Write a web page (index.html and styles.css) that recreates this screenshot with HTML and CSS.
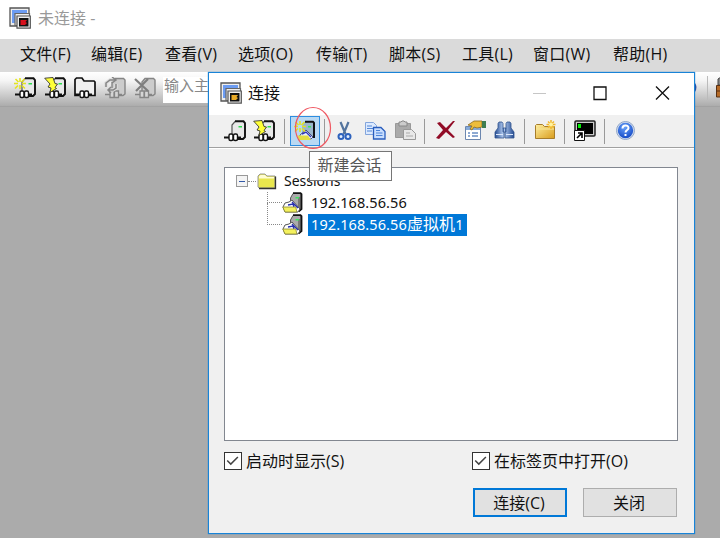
FILE: index.html
```html
<!DOCTYPE html>
<html lang="zh-CN">
<head>
<meta charset="utf-8">
<title>未连接</title>
<link rel="stylesheet" href="styles.css">
</head>
<body>
<svg class="defs" aria-hidden="true">
  <defs>
    <linearGradient id="gold" x1="0" y1="0" x2="1" y2="1"><stop offset="0" stop-color="#fff0a0"/><stop offset="1" stop-color="#d99c1c"/></linearGradient>
    <radialGradient id="ball" cx=".45" cy=".3" r=".7"><stop offset="0" stop-color="#69a2fa"/><stop offset="1" stop-color="#174cc8"/></radialGradient>
    <linearGradient id="lens" x1="0" y1="0" x2="1" y2="0"><stop offset="0" stop-color="#244b91"/><stop offset=".45" stop-color="#b8d0f4"/><stop offset="1" stop-color="#244b91"/></linearGradient>
    <symbol id="app" viewBox="0 0 22 22">
      <path fill="#eee" stroke="#555" stroke-width="1.300" d="M1 1h19v18H1z"/>
      <path fill="#6c9cf2" d="M3 3h15v4H7v9H3z"/>
      <path fill="#eee" stroke="#666" stroke-width="1.200" d="M6 6.500h14.500v12H6z"/>
      <path fill="#eee" stroke="#555" stroke-width="1.200" d="M8 9h13.300v12.200H8z"/>
      <path fill="#111" d="M10 11h9.500v8.500H10z"/>
      <path fill="currentColor" d="M11.500 13H18l-1.500 2L18 16l-2 2h-4.500z"/>
    </symbol>
    <symbol id="plug" viewBox="0 0 22 22">
      <path fill="none" stroke="#111" stroke-width="2.200" d="M0 17.500h6M13 17.500h4"/>
      <rect x="5" y="14" width="4" height="6.500" rx="1.500" fill="#fff" stroke="#111" stroke-width="1.400"/>
      <rect x="9.500" y="14" width="4" height="6.500" rx="1.500" fill="#fff" stroke="#111" stroke-width="1.400"/>
    </symbol>
    <symbol id="box" viewBox="0 0 22 22">
      <path fill="#e9e9e9" d="M8 5 11 1.500h10V17l-2 1.500H8z"/>
      <path fill="none" stroke="#555" stroke-width="1.200" d="M8 15V5l3-3.500h2"/>
      <path fill="none" stroke="#111" stroke-width="1.900" d="M11 1.300h8.500L21 3v14l-2 2h-5"/>
      <path fill="#2fdc50" d="M14.500 6h3.500v1.500h-3.500z"/>
    </symbol>
    <symbol id="pc" viewBox="0 0 22 22"><use href="#box"/><use href="#plug"/></symbol>
    <symbol id="bolt" viewBox="0 0 22 22"><use href="#box"/><use href="#plug" x="1"/><path fill="#ffff38" stroke="#222" stroke-width=".8" d="m.7 1.200 8.300-.7 2 6 2.500.5-2.500 3.500 1.500 1-6.500 4 1-4.500-3-1 2-3z"/></symbol>
    <symbol id="spark" viewBox="0 0 22 22"><path stroke="#e4e420" stroke-width="1.600" d="M6 1v4M6 8v4M0 6.500h4M8 6.500h4M1.500 2l3 3M8 8.500l3 3M10.500 2l-3 3M4 8.500l-3 3"/></symbol>
    <symbol id="newpc" viewBox="0 0 22 22"><use href="#box"/><use href="#plug" x="1"/><use href="#spark"/></symbol>
    <symbol id="outfolder" viewBox="0 0 22 22"><path fill="#f0f0f0" stroke="#111" stroke-width="1.700" d="M5 18.500H1V2.500L2.500 1H8l2 3h10l1 1v13.500h-7"/><use href="#plug" x="1"/></symbol>
    <symbol id="grayplug" viewBox="0 0 22 22"><path fill="#ccc" stroke="#858585" stroke-width="1.400" d="M8 14V5l3-3.500h8.500L21 3v14l-2 1.500h-4"/><path stroke="#858585" stroke-width="1.500" d="M1 17.500h5M14 17.500h4"/><path fill="#d5d5d5" stroke="#858585" stroke-width="1.300" d="M6 14h4v6.500H6zM10.500 14h4v6.500h-4z"/></symbol>
    <symbol id="reconnect" viewBox="0 0 22 22"><use href="#grayplug"/><path fill="none" stroke="#ddd" stroke-width="3.500" d="M2 10V6l4-3h5M12 7v4l-3 2H5"/><path fill="none" stroke="#858585" stroke-width="1.500" d="M2 10V6l4-3h5M8 0l4 3-4 3M12 7v4l-3 2H4m3-3-3 3 3 3"/></symbol>
    <symbol id="disconnect" viewBox="0 0 22 22"><use href="#grayplug"/><path stroke="#7e7e7e" stroke-width="2.200" d="m1 2 13 12M14 2 2 14"/></symbol>
    <symbol id="session" viewBox="0 0 22 22">
      <path fill="#aaa" stroke="#555" d="M8.500 6 11 1.500h8V18H8.500z"/>
      <path fill="#777" d="M16 5h3v13h-3z"/>
      <path fill="none" stroke="#111" stroke-width="1.800" d="M11 1.200h7.500l1 1V17l-3 2.500"/>
      <path fill="#3be85c" d="M13.500 5h3.500v1.500h-3.500z"/>
      <path fill="#fff" stroke="#555" d="m1 15 2-4 4-1 3-2 8 9-2 3H3z"/>
      <path fill="none" stroke="#2830b0" stroke-width="1.400" d="m6 13 5-1 1 3M10 10l6 6"/>
      <path fill="#f4f15e" stroke="#8e8c30" stroke-width=".8" d="M.8 15h13l1 5H3z"/>
    </symbol>
    <symbol id="newsession" viewBox="0 0 22 22">
      <path fill="#9bb7cb" d="M8 6 11 1.500h9V17H8z"/><path fill="none" stroke="#111" stroke-width="2" d="M11 1.800h8l1 1V18"/>
      <path fill="#3be85c" d="M14 6h3v1.500h-3z"/><path fill="#e7efff" stroke="#283060" stroke-width=".8" d="m6 15 6-5 7 7-2 2H6z"/>
      <path fill="none" stroke="#3038b8" stroke-width="1.400" d="m8 14 4-2 5 5"/><path fill="#e1df43" d="M3 15.500h11l3 4.500H5z"/>
      <use href="#spark"/>
    </symbol>
    <symbol id="cut" viewBox="0 0 22 22"><path stroke="#53749e" stroke-width="2.200" d="m6.500 2 5 12M14.500 2l-5 12"/><g fill="#e4eefc" stroke="#2d62bd" stroke-width="2"><circle cx="7" cy="16.500" r="2.500"/><circle cx="14" cy="16.500" r="2.500"/></g></symbol>
    <symbol id="copy" viewBox="0 0 22 22"><path fill="#dceaff" stroke="#83a5dc" d="M1.500 2.500h8l3 3v9h-11z"/><path stroke="#5286d5" d="M3 6h5M3 8.500h6M3 11h5"/><path fill="#c9defe" stroke="#295dbd" stroke-width="1.300" d="M9.500 7.500h7.500l4 4v7.500H9.500z"/><path stroke="#4a82d8" d="M12 10.500h4M12 13h6.500M12 15.500h6.500"/></symbol>
    <symbol id="paste" viewBox="0 0 22 22"><path fill="#aaa" stroke="#999" d="M1.500 3.500h15v14h-15z"/><path fill="#ccc" stroke="#888" d="M5 2h2l1-1h2l1 1h2v4H5z"/><path fill="#e8e8e8" stroke="#999" d="M9.500 9.500h8l4 4v6h-12z"/><path stroke="#aaa" d="M12 13h4M12 16h7"/></symbol>
    <symbol id="delete" viewBox="0 0 22 22"><path fill="#910b26" d="m2 3 3-1 6 6 7-7h2l-7 9 7 7-2 1-7-6-7 7-3-1 7-8z"/></symbol>
    <symbol id="props" viewBox="0 0 22 22"><path fill="#fff" stroke="#6c87af" d="M1.500 6.500h15v13h-15z"/><path fill="#86aad8" d="M2 7h14v3H2z"/><path stroke="#698fc3" stroke-width="1.300" d="M4 13h2m2 0h6M4 16h2m2 0h6"/><path fill="#edbd3b" stroke="#8c6b20" stroke-width=".8" d="m4 5 6-4h8v6l-5 1-3-1-2 3-2-1 2-3z"/><path fill="#3f7d50" d="M18 1h4v7h-4z"/></symbol>
    <symbol id="find" viewBox="0 0 22 22"><g fill="url(#lens)" stroke="#31538d" stroke-width=".8"><path d="M4 3.500 5 2h3l1 1.500V8l1 2v8H1v-6l3-4zM17 3.500 16 2h-3l-1 1.500V8l-1 2v8h9v-6l-3-4z"/><path d="M9 8h3v4H9z"/></g><path stroke="#dce9fc" d="M2 14.500h7M12 14.500h7"/></symbol>
    <symbol id="newfolder" viewBox="0 0 22 22"><path fill="url(#gold)" stroke="#a77d2b" d="M1.500 18.500v-13l1-1h6l2 2h10v12z"/><path stroke="#f7e79c" d="M2 9h18"/><path stroke="#f1b82c" stroke-width="1.500" d="M17 0v9M12.500 4.500h9M14 1.500l6 6M20 1.500l-6 6"/><circle cx="17" cy="4.500" r="2" fill="#fff3a0"/></symbol>
    <symbol id="terminal" viewBox="0 0 22 22"><rect x="1" y="1" width="20" height="15" rx="1" fill="#ccc" stroke="#222" stroke-width="1.500"/><path fill="#000" d="M3 3h16v11H3z"/><path fill="#0e0" d="M4 4h3v4H4z"/><path fill="#fff" stroke="#111" d="M.5 10.500h10v10H.500z"/><path stroke="#000" stroke-width="1.600" fill="none" d="m3 18 5-5M4 13h4v5"/></symbol>
    <symbol id="help" viewBox="0 0 22 22"><circle cx="10.500" cy="10.500" r="9" fill="#d5dfef" stroke="#8fa5c9"/><circle cx="10.500" cy="10.500" r="7.700" fill="url(#ball)"/><path fill="none" stroke="#fff" stroke-width="2" d="M7.500 8.500c0-4 6-4 6-.5 0 2-3 2-3 4.500M10.500 14v2"/></symbol>
    <symbol id="folder" viewBox="0 0 20 17"><path fill="#e9e74e" stroke="#999" d="M1 14V3l2-2h5l2 2h8v12H2z"/><path fill="#fffdd5" d="M2 3.500 3.500 2H8l2 2h7v1.500H2z"/><path fill="none" stroke="#333" stroke-width="1.300" d="M18.500 3.500v12H2"/></symbol>
    <symbol id="tick" viewBox="0 0 18 18"><path fill="none" stroke="#444" stroke-width="1.700" d="m2.500 8.500 4 4 8-8"/></symbol>
  </defs>
</svg>

<div class="desktop">
  <header class="titlebar"><svg class="icon red"><use href="#app"/></svg><span>未连接 -</span></header>
  <nav class="menu">
    <span>文件(F)</span><span>编辑(E)</span><span>查看(V)</span><span>选项(O)</span><span>传输(T)</span><span>脚本(S)</span><span>工具(L)</span><span>窗口(W)</span><span>帮助(H)</span>
  </nav>
  <div class="maintools">
    <svg class="icon"><use href="#newpc"/></svg>
    <svg class="icon"><use href="#bolt"/></svg>
    <svg class="icon"><use href="#outfolder"/></svg>
    <svg class="icon"><use href="#reconnect"/></svg>
    <svg class="icon"><use href="#disconnect"/></svg>
    <span class="host">输入主</span>
    <svg class="edge" viewBox="0 0 25 32"><path fill="#2848a0" d="M0 11q3 4 0 9z"/><path stroke="#bbb" d="M12.500 4v24"/><path fill="#888" stroke="#444" d="M23 13V7l3-2v8z"/><path fill="#b66b27" stroke="#573014" d="M21.500 13.500H26V25h-4.500zM22 19h4"/></svg>
  </div>
</div>

<section class="dialog">
  <header class="caption">
    <svg class="icon amber"><use href="#app"/></svg><span class="name">连接</span>
    <svg class="controls" viewBox="0 0 140 20"><path stroke="#c6c6c6" d="M0 10.500h13"/><path fill="none" stroke="#111" stroke-width="1.300" d="M61 4h12v12.500H61zM123 3.500l13 13M136 3.500l-13 13"/></svg>
  </header>
  <div class="tools">
    <svg class="icon"><use href="#pc"/></svg>
    <svg class="icon t2"><use href="#bolt"/></svg>
    <i class="sep"></i>
    <span class="active"><svg class="icon"><use href="#newsession"/></svg><svg class="ring" viewBox="0 0 40 44"><ellipse cx="20" cy="22" rx="17.500" ry="20.500"/></svg></span>
    <i class="sep s2"></i>
    <svg class="icon first"><use href="#cut"/></svg>
    <svg class="icon next"><use href="#copy"/></svg>
    <svg class="icon next"><use href="#paste"/></svg>
    <i class="sep s3"></i>
    <svg class="icon del"><use href="#delete"/></svg>
    <svg class="icon t2"><use href="#props"/></svg>
    <svg class="icon next"><use href="#find"/></svg>
    <i class="sep s3"></i>
    <svg class="icon first"><use href="#newfolder"/></svg>
    <i class="sep s3"></i>
    <svg class="icon first"><use href="#terminal"/></svg>
    <i class="sep s3"></i>
    <svg class="icon del"><use href="#help"/></svg>
  </div>
  <div class="tree">
    <div class="root"><i class="minus"></i><i class="link"></i><svg class="folder"><use href="#folder"/></svg><span>Sessions</span></div>
    <div class="child"><i class="branch"></i><svg class="icon"><use href="#session"/></svg><span class="label">192.168.56.56</span></div>
    <div class="child"><i class="branch last"></i><svg class="icon"><use href="#session"/></svg><span class="label selected">192.168.56.56<span class="cjk">虚拟机</span>1</span></div>
  </div>
  <div class="checks">
    <label><svg class="check"><use href="#tick"/></svg>启动时显示(S)</label>
    <label><svg class="check"><use href="#tick"/></svg>在标签页中打开(O)</label>
  </div>
  <footer class="actions"><button class="primary">连接(C)</button><button>关闭</button></footer>
  <div class="tooltip">新建会话</div>
</section>
</body>
</html>
```
FILE: styles.css
```css
* { box-sizing: border-box; }
body { margin: 0; width: 720px; height: 538px; overflow: hidden; background: #ababab; color: #111; font: 16px/22px "Open Sans", "Noto Sans CJK SC", sans-serif; }
.defs { position: absolute; width: 0; height: 0; }
.icon { display: block; flex: none; width: 22px; height: 22px; }
.titlebar { display: flex; align-items: center; height: 39px; padding: 0 0 4px 9px; gap: 7px; background: #fff; color: #999; }
.red { color: #d8101c; }
.amber { color: #e9ab28; }
.menu { display: grid; grid-template-columns: 71px 74px 73px 78px 73px 73px 71px 80px 60px; align-items: center; height: 33px; padding: 0 0 3px 20px; background: #dadada; white-space: nowrap; letter-spacing: .25px; }
.maintools { display: flex; height: 35px; gap: 8px; padding: 5px 0 0 14px; background: linear-gradient(#fff, #f5f5f5 25%, #acacac); border-bottom: 1px solid #a2a2a2; }
.maintools .host { width: 46px; height: 26px; margin: 0 0 0 -1px; padding-left: 1px; background: #fff; color: #888; white-space: nowrap; font-size: 15px; line-height: 17px; }
.edge { width: 25px; height: 32px; margin: -5px 0 0 auto; }
.dialog { position: absolute; left: 208px; top: 72px; width: 487px; height: 462px; border: 1px solid #1883d7; background: #f0f0f0; box-shadow: 0 0 1px #1883d7; }
.caption { display: flex; align-items: center; height: 42px; padding: 0 21px 2px 11px; background: #fff; }
.name { margin-left: 6px; }
.controls { width: 140px; height: 20px; margin-left: auto; }
.tools { display: flex; align-items: center; height: 33px; padding-left: 15px; border-bottom: 1px solid #a0a0a0; box-shadow: 0 1px #fff; }
.t2 { margin-left: 7px; }
.sep { width: 1px; height: 25px; margin-left: 9px; background: #999; }
.active { position: relative; display: flex; align-items: center; justify-content: center; width: 30px; height: 30px; margin-left: 5px; border: 1px solid #2c8de0; background: #b9d9f3; }
.ring { position: absolute; left: 2px; top: -11px; width: 40px; height: 44px; fill: none; stroke: #ef5963; stroke-width: 1.200; }
.s2 { margin-left: 4px; }
.s3 { margin-left: 8px; }
.first { margin-left: 9px; }
.next { margin-left: 8px; }
.del { margin-left: 10px; }
.tree { width: 454px; height: 274px; margin: 19px 0 0 15px; padding: 2px 0 0 11px; border: 1px solid #828790; background: #fff; font-family: "Noto Sans", "Noto Sans CJK SC", sans-serif; font-size: 15px; }
.root, .child { display: flex; align-items: center; height: 22px; }
.minus { display: grid; place-items: center; width: 12px; height: 12px; border: 1px solid #999; background: #f4f4f4; }
.minus::before { content: ""; width: 6px; height: 1px; background: #3359a8; }
.link { width: 8px; margin-right: 1px; border-top: 1px dotted #888; }
.folder { width: 20px; height: 17px; }
.root span { margin-left: 7px; font-size: 14px; }
.child { padding-left: 31px; }
.branch { align-self: flex-start; width: 15px; height: 11px; border-left: 1px dotted #888; border-bottom: 1px dotted #888; }
.last { height: 22px; margin-top: -11px; }
.label { height: 22px; margin-left: 4px; padding: 0 3px; white-space: nowrap; font-size: 14.500px; letter-spacing: .1px; line-height: 20px; }
.selected { background: #0078d7; color: #fff; }
.cjk { font-size: 16px; }
.checks { display: grid; grid-template-columns: 248px 1fr; height: 22px; margin: 9px 0 0 15px; }
.checks label { display: flex; align-items: center; gap: 4px; white-space: nowrap; }
.check { width: 18px; height: 18px; border: 1.500px solid #333; background: #fff; }
.actions { display: flex; justify-content: flex-end; gap: 16px; margin: 16px 17px 0 0; }
button { width: 94px; height: 29px; padding: 0 2px 0 0; border: 1px solid #adadad; background: #e1e1e1; color: #111; font: inherit; line-height: 24px; }
.primary { border: 2px solid #0078d7; }
.tooltip { position: absolute; left: 100px; top: 78px; width: 83px; height: 30px; padding-right: 2px; border: 1px solid #767676; background: #fff; color: #575757; text-align: center; line-height: 26px; }
```
